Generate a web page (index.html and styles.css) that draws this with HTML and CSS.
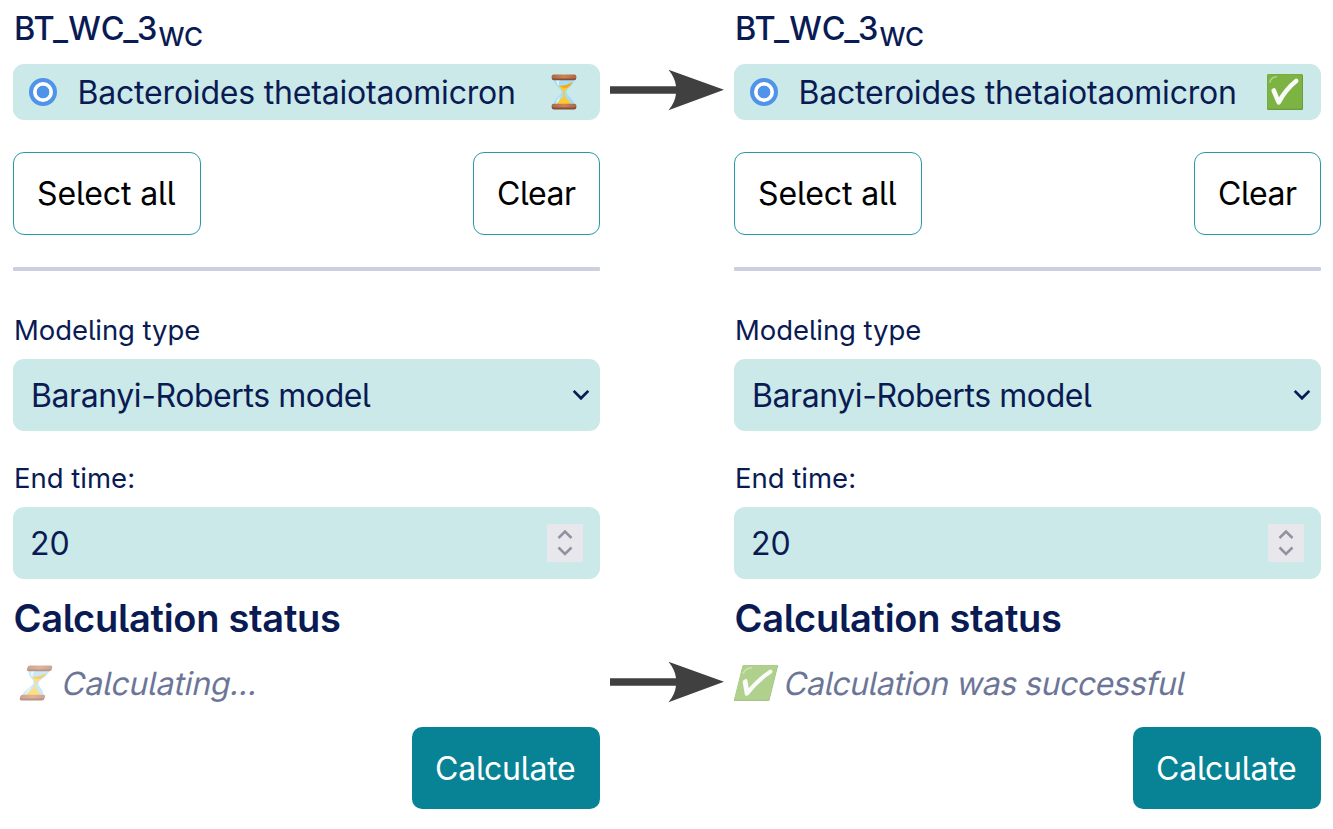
FILE: index.html
```html
<!DOCTYPE html>
<html lang="en">
<head>
<meta charset="utf-8">
<title>Calculation status</title>
<link rel="stylesheet" href="styles.css">
</head>
<body>
<svg class="defs" width="0" height="0" aria-hidden="true">
  <defs>
    <linearGradient id="wood" x1="0" y1="0" x2="1" y2="0"><stop offset="0" stop-color="#a9694a"/><stop offset=".5" stop-color="#c98458"/><stop offset="1" stop-color="#a9694a"/></linearGradient>
    <symbol id="hourglass" viewBox="0 0 26 36">
      <path d="M2.500 5C3 12 10.500 14 10.500 18S3 24 2.500 31h21C23 24 15.500 22 15.500 18S23 12 23.500 5z" fill="#a5dcf7"/>
      <path d="M5 6h4c-2 3-1 6 1 8-3-2-5-5-5-8zM5 30c0-4 2-6 5-8-2 3-2 5-2 8z" fill="#d8f3ff"/>
      <path d="M7.500 11.500c5 .8 10-.6 13.500-3.500-.8 4.500-6.500 6.500-7.200 9.500l.2 5c1 3 5.500 4 6.500 8.500H5.500c1-4.500 5.500-5.500 6.500-8.500l.2-5c-.6-2.500-3.400-3.300-4.700-6z" fill="#fdc92f"/>
      <path d="M8 11.500c5 .8 9.500-.6 13-3.500-.5 2.500-2.500 4-4.300 5.500-3 .8-6.200.2-8.700-2z" fill="#eeaa16"/>
      <rect x=".7" y="1" width="24.600" height="5.200" rx="2.200" fill="#8a4b35"/>
      <rect x=".7" y=".6" width="24.600" height="4" rx="2" fill="url(#wood)"/>
      <rect x=".7" y="30.300" width="24.600" height="5.200" rx="2.200" fill="#8a4b35"/>
      <rect x=".7" y="29.800" width="24.600" height="3.600" rx="1.800" fill="url(#wood)"/>
    </symbol>
    <symbol id="check" viewBox="0 0 36 36">
      <rect width="36" height="36" rx="1.500" fill="#689f38"/>
      <rect x=".3" y=".3" width="34.700" height="34.400" rx="1.500" fill="#7cb342"/>
      <path d="M3 8c.5-3 2.500-4.800 6.500-5.200" fill="none" stroke="#aed581" stroke-width="1.600" stroke-linecap="round"/>
      <path d="M6.700 16.500L11.700 28.300Q19 15 29.200 7" fill="none" stroke="#fafafa" stroke-width="4.600" stroke-linecap="round" stroke-linejoin="round"/>
    </symbol>
    <symbol id="arrow" viewBox="0 0 114 42">
      <path d="M0 17.200H66Q65 8.500 58.500 .7L114 20.800 58.500 41.300Q65 33.500 66 24.700H0z" fill="#404040"/>
    </symbol>
  </defs>
</svg>
<main class="board">
  <section class="panel">
    <h2 class="title"><span class="name">BT_WC_3</span><span class="sub">WC</span></h2>
    <div class="strain"><i class="radio"></i><span class="t-strain">Bacteroides thetaiotaomicron</span><svg class="glass"><use href="#hourglass"/></svg></div>
    <div class="actions"><button class="btn all"><span class="t-all">Select all</span></button><button class="btn clear"><span class="t-clear">Clear</span></button></div>
    <div class="rule"></div>
    <div class="label"><span class="t-type">Modeling type</span></div>
    <div class="field select"><span class="t-model">Baranyi-Roberts model</span><svg class="chev" viewBox="0 0 18 12"><path d="M1.700 1.900L9 9.300l7.300-7.400"/></svg></div>
    <div class="label second"><span class="t-end">End time:</span></div>
    <div class="field number"><span class="t-num">20</span><svg class="spin" viewBox="0 0 36 38"><path d="M11.500 14L18 7.500 24.500 14M11.500 23.500L18 30l6.500-6.500"/></svg></div>
    <h3 class="heading"><span class="t-head">Calculation status</span></h3>
    <div class="status"><svg class="glass"><use href="#hourglass"/></svg><span class="t-calc">Calculating...</span></div>
    <div class="submit"><button class="primary"><span class="t-go">Calculate</span></button></div>
  </section>
  <div class="arrows"><svg class="arrow"><use href="#arrow"/></svg><svg class="arrow"><use href="#arrow"/></svg></div>
  <section class="panel">
    <h2 class="title"><span class="name">BT_WC_3</span><span class="sub">WC</span></h2>
    <div class="strain"><i class="radio"></i><span class="t-strain">Bacteroides thetaiotaomicron</span><svg class="tick"><use href="#check"/></svg></div>
    <div class="actions"><button class="btn all"><span class="t-all">Select all</span></button><button class="btn clear"><span class="t-clear">Clear</span></button></div>
    <div class="rule"></div>
    <div class="label"><span class="t-type">Modeling type</span></div>
    <div class="field select"><span class="t-model">Baranyi-Roberts model</span><svg class="chev" viewBox="0 0 18 12"><path d="M1.700 1.900L9 9.300l7.300-7.400"/></svg></div>
    <div class="label second"><span class="t-end">End time:</span></div>
    <div class="field number"><span class="t-num">20</span><svg class="spin" viewBox="0 0 36 38"><path d="M11.500 14L18 7.500 24.500 14M11.500 23.500L18 30l6.500-6.500"/></svg></div>
    <h3 class="heading"><span class="t-head">Calculation status</span></h3>
    <div class="status"><svg class="tick"><use href="#check"/></svg><span class="t-done">Calculation was successful</span></div>
    <div class="submit"><button class="primary"><span class="t-go">Calculate</span></button></div>
  </section>
</main>
</body>
</html>
```
FILE: styles.css
```css
* { box-sizing: border-box; }
body { margin: 0; background: #fff; color: #0a1b54; font-family: Inter, "Liberation Sans", sans-serif; font-size: 32px; font-feature-settings: "cv05" 1; }
.defs { display: block; width: 0; height: 0; position: absolute; }
.board { display: grid; grid-template-columns: 587px 134px 587px; padding-left: 13px; width: 1333px; height: 829px; overflow: hidden; }
.panel { display: flex; flex-direction: column; white-space: nowrap; }
.title { margin: 0; height: 64px; padding: 9px 0 0 1px; font-size: 32.500px; line-height: 40px; font-weight: 500; display: flex; }
.name { letter-spacing: .1px; }
.sub { font-size: 26px; padding: 8px 0 0 1px; line-height: 40px; height: 48px; letter-spacing: -.4px; }
.strain { height: 56px; border-radius: 11px; background: #cae9e8; display: flex; align-items: center; padding: 0 17px 0 16px; }
.radio { width: 28px; height: 28px; border-radius: 50%; border: 4.500px solid #4f94e8; background: radial-gradient(circle, #4f94e8 0 6px, #fff 6.700px); margin-right: 20.500px; }
.strain svg { margin-left: auto; }
.glass { width: 26px; height: 36px; }
.strain .glass { margin-right: 6px; }
.tick { width: 36px; height: 36px; }
.strain .tick { margin-right: 1px; }
.actions { display: flex; justify-content: space-between; margin-top: 32px; }
.btn { font: inherit; font-feature-settings: inherit; color: #000; height: 83px; border: 1.500px solid #259aa7; border-radius: 11px; background: #fff; padding: 0 0 0 23px; text-align: left; }
.all { width: 188px; }
.clear { width: 127px; }
.rule { height: 4px; margin-top: 31.500px; background: #cccfdf; border-radius: 1px; }
.label { height: 88.500px; padding: 43px 0 0 1px; line-height: 32px; font-size: 27.500px; }
.second { height: 76px; padding-top: 31px; }
.field { height: 72px; border-radius: 11px; background: #cae9e8; display: flex; align-items: center; justify-content: space-between; padding: 0 17px; }
.select { padding: 0 10px 0 18px; }
.chev { width: 18px; height: 12px; }
.chev path { fill: none; stroke: #0a1b54; stroke-width: 2.700; }
.spin { width: 36px; height: 38px; background: #e8e7ec; }
.spin path { fill: none; stroke: #9191a0; stroke-width: 2.500; }
.heading { margin: 0; padding-left: .5px; height: 79px; line-height: 79px; font-size: 38px; font-weight: 600; }
.status { height: 50px; display: flex; align-items: center; opacity: .6; }
.status span { transform: skewX(-12deg); }
.status svg { transform: skewX(-14deg); }
.status .glass { margin: 0 14px 0 10px; }
.status .tick { margin: 0 11px 0 4px; }
.submit { display: flex; justify-content: flex-end; padding-top: 19px; }
.primary { width: 188px; height: 82px; border: 0; border-radius: 10px; background: #088395; color: #fff; font: inherit; font-feature-settings: inherit; text-align: left; padding: 0 0 0 23px; }
.t-strain { letter-spacing: -.19px; }
.t-all { letter-spacing: -.1px; }
.t-clear { letter-spacing: -.4px; }
.t-type { letter-spacing: -.08px; }
.t-model { letter-spacing: -.42px; }
.t-head { letter-spacing: -.28px; }
.t-calc { letter-spacing: -.2px; }
.t-done { letter-spacing: -.5px; }
.t-go { letter-spacing: -.22px; }
.arrows { padding: 69px 0 0 10px; display: flex; flex-direction: column; gap: 550px; }
.arrow { width: 114px; height: 42px; }
```
